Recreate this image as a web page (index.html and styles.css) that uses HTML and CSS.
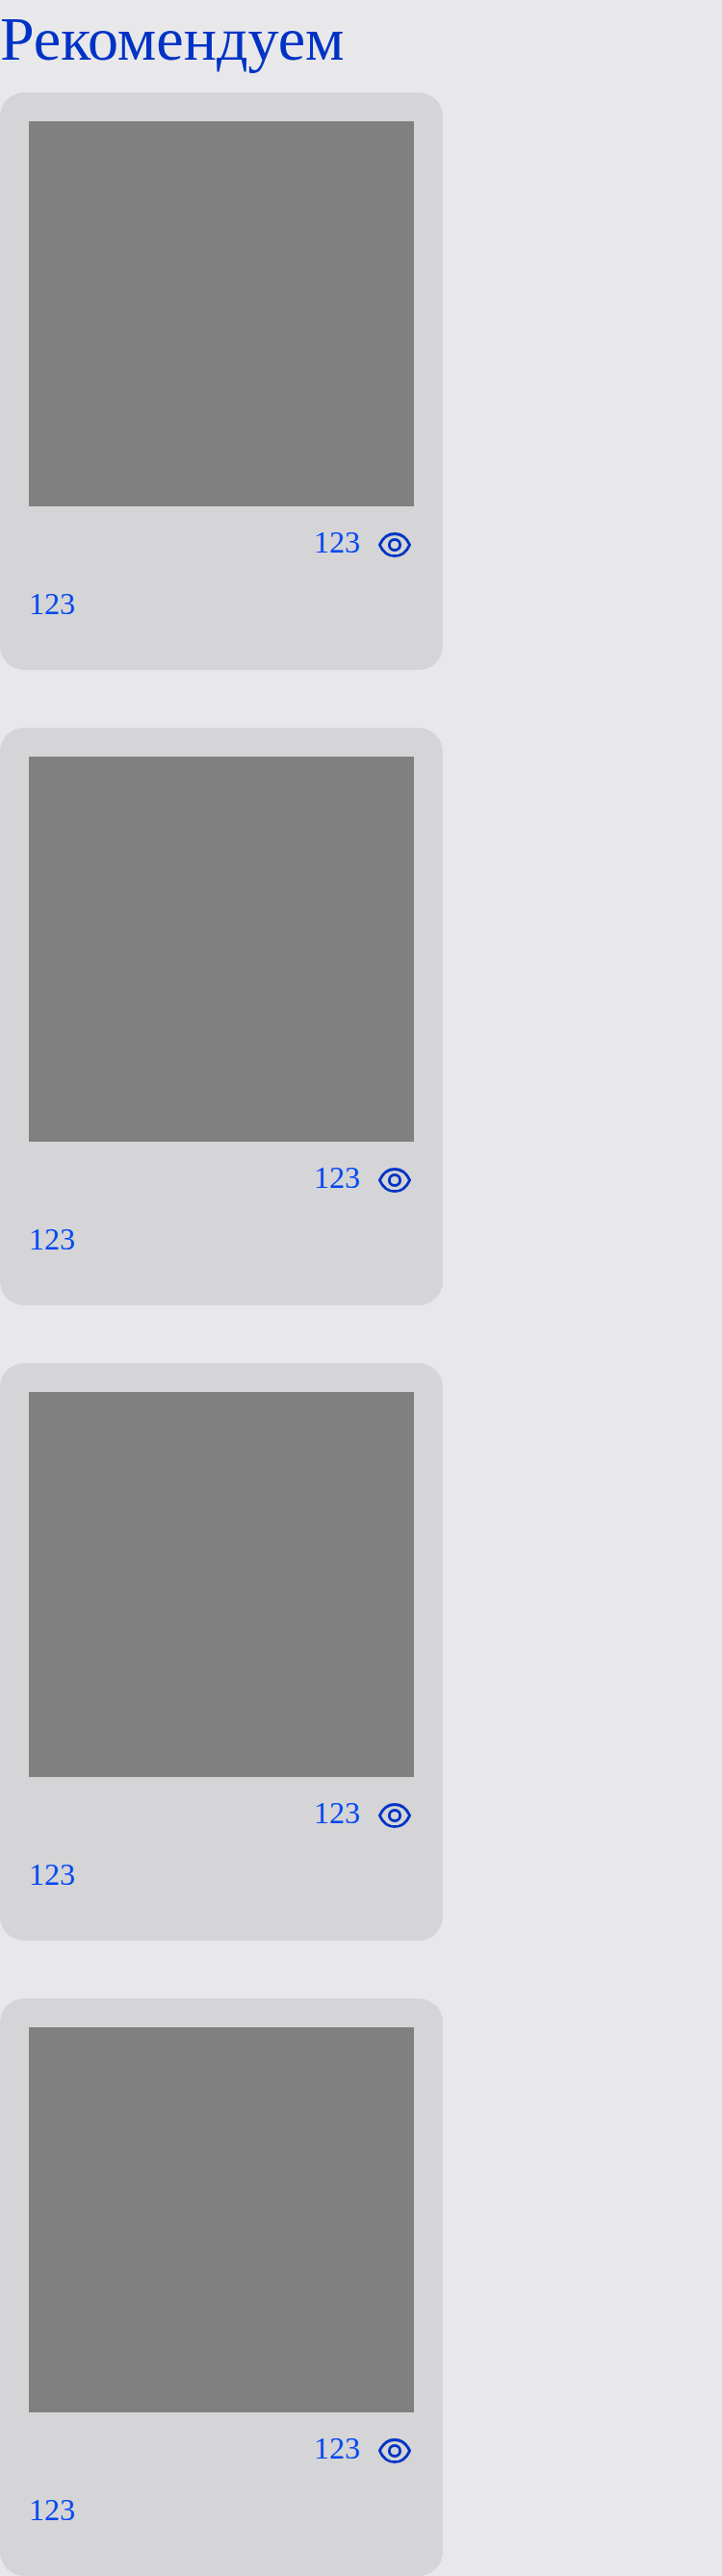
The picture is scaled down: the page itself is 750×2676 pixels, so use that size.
FILE: index.html
```html
<!DOCTYPE html>
<html lang="ru">
<head>
<meta charset="utf-8">
<title>Рекомендуем</title>
<link rel="stylesheet" href="styles.css">
</head>
<body>
<h1 class="title">Рекомендуем</h1>
<div class="list">
<article class="card"><div class="cover"></div><div class="views"><span class="count">123</span><svg class="eye" viewBox="0 0 40 40"><path d="M4.4 20C7.5 13 13.2 8.4 20 8.4S32.5 13 35.6 20C32.5 27 26.8 31.6 20 31.6S7.5 27 4.4 20Z"/><circle cx="20" cy="20" r="5.6"/></svg></div><p class="name">123</p></article>
<article class="card"><div class="cover"></div><div class="views"><span class="count">123</span><svg class="eye" viewBox="0 0 40 40"><path d="M4.4 20C7.5 13 13.2 8.4 20 8.4S32.5 13 35.6 20C32.5 27 26.8 31.6 20 31.6S7.5 27 4.4 20Z"/><circle cx="20" cy="20" r="5.6"/></svg></div><p class="name">123</p></article>
<article class="card"><div class="cover"></div><div class="views"><span class="count">123</span><svg class="eye" viewBox="0 0 40 40"><path d="M4.4 20C7.5 13 13.2 8.4 20 8.4S32.5 13 35.6 20C32.5 27 26.8 31.6 20 31.6S7.5 27 4.4 20Z"/><circle cx="20" cy="20" r="5.6"/></svg></div><p class="name">123</p></article>
<article class="card"><div class="cover"></div><div class="views"><span class="count">123</span><svg class="eye" viewBox="0 0 40 40"><path d="M4.4 20C7.5 13 13.2 8.4 20 8.4S32.5 13 35.6 20C32.5 27 26.8 31.6 20 31.6S7.5 27 4.4 20Z"/><circle cx="20" cy="20" r="5.6"/></svg></div><p class="name">123</p></article>
</div>
</body>
</html>
```
FILE: styles.css
```css
* { box-sizing: border-box; margin: 0; padding: 0; }
body { background: #e8e8ea; color: #0033c5; font-family: "Liberation Serif", serif; }
.title { height: 96px; font-size: 64px; font-weight: 400; line-height: 82px; }
.list { display: flex; flex-direction: column; gap: 60px; }
.card { width: 460px; height: 600px; padding: 30px; border-radius: 25px; background: #d5d5d7; }
.cover { width: 400px; height: 400px; background: #808080; }
.views { display: flex; justify-content: flex-end; align-items: center; gap: 16px; height: 80px; font-size: 32px; color: #0048f0; }
.count { padding-bottom: 6px; line-height: 36px; }
.eye { width: 40px; height: 40px; fill: none; stroke: #0033c5; stroke-width: 3; stroke-linejoin: round; }
.name { font-size: 32px; line-height: 42px; color: #0048f0; }
```
